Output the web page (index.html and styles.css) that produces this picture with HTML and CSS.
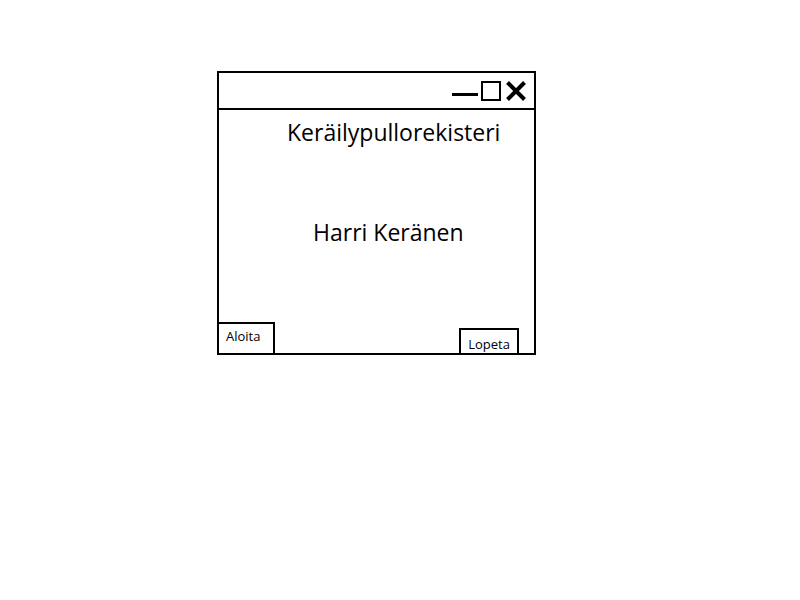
FILE: index.html
```html
<!DOCTYPE html>
<html lang="fi">
<head>
  <meta charset="UTF-8" />
  <title>Keräilypullorekisteri</title>
  <link rel="stylesheet" href="styles.css">
</head>
<body>
  <div class="window">
    <div class="titlebar">
      <span class="btn-min"></span>
      <span class="btn-max"></span>
      <svg class="btn-close" width="22" height="20" viewBox="0 0 22 20">
        <path d="M2.5 1.5 L19.5 18.5 M19.5 1.5 L2.5 18.5" stroke="#000" stroke-width="4" fill="none" />
      </svg>
    </div>
    <div class="content">
      <div class="app-title">Keräilypullorekisteri</div>
      <div class="author">Harri Keränen</div>
      <div class="actions">
        <button class="start">Aloita</button>
        <button class="quit">Lopeta</button>
      </div>
    </div>
  </div>
</body>
</html>
```

FILE: styles.css
```css
body {
  margin: 0;
  padding: 71px 0 0 217px;
  background: #fff;
  color: #000;
  font-family: 'Open Sans', 'Noto Sans', sans-serif;
}
.window {
  width: 315px;
  border: 2px solid #000;
  display: flex;
  flex-direction: column;
}
.titlebar {
  height: 35px;
  border-bottom: 2px solid #000;
  display: flex;
  align-items: center;
  justify-content: flex-end;
  padding-right: 7px;
}
.btn-min {
  width: 26px;
  height: 3px;
  background: #000;
  margin-top: 7px;
  margin-right: 3px;
}
.btn-max {
  width: 16px;
  height: 16px;
  border: 2px solid #000;
  margin-right: 4px;
}
.content {
  height: 243px;
  display: flex;
  flex-direction: column;
}
.app-title {
  font-size: 23px;
  line-height: 28px;
  margin: 8px 0 0 68px;
}
.author {
  font-size: 23px;
  line-height: 28px;
  margin: 72px 0 0 94px;
}
.actions {
  margin-top: auto;
  display: flex;
  align-items: flex-end;
  justify-content: space-between;
  padding-right: 15px;
}
.actions button {
  font-family: inherit;
  font-size: 13px;
  background: #fff;
  color: #000;
  border: 2px solid #000;
  margin: 0 0 -2px 0;
  cursor: pointer;
}
.actions .start {
  width: 58px;
  height: 33px;
  margin-left: -2px;
  text-align: left;
  padding: 0 0 6px 7px;
}
.actions .quit {
  width: 60px;
  height: 27px;
  padding: 4px 0 0 0;
}
```
